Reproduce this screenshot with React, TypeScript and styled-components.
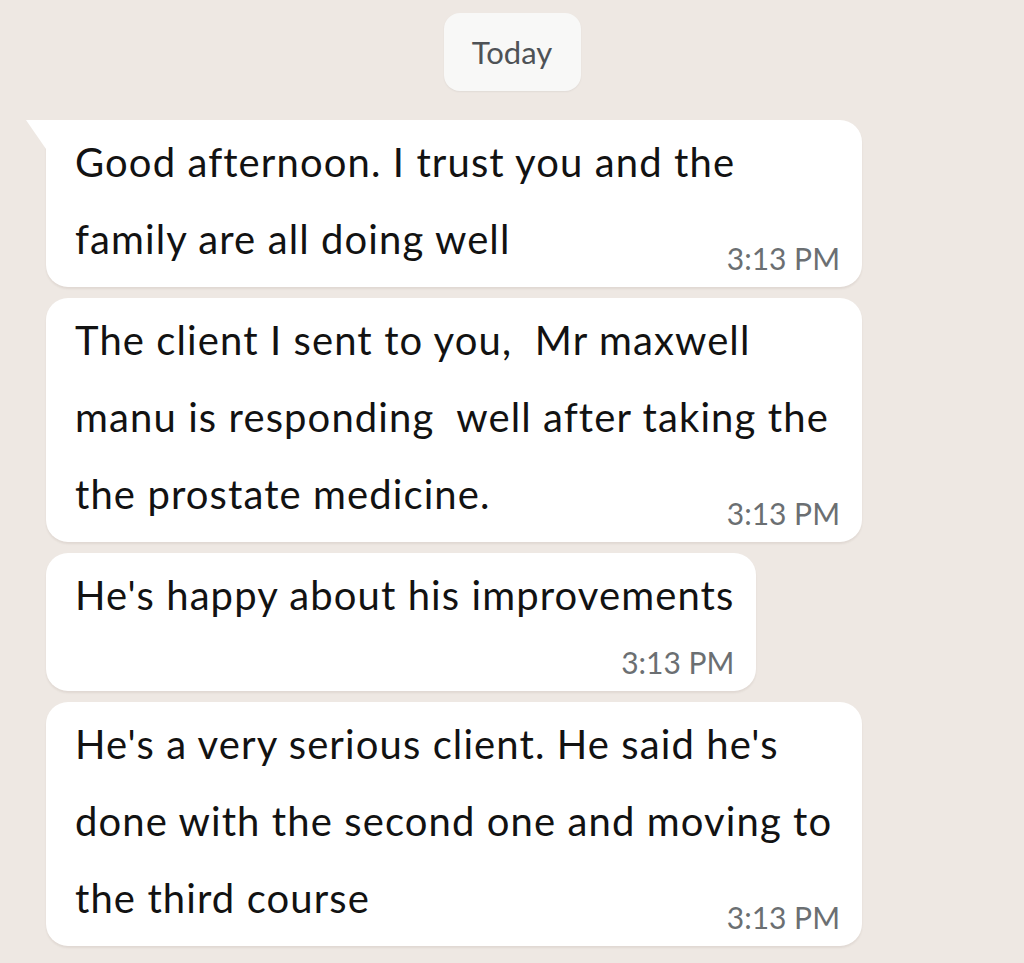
import React from 'react';
import styled, { createGlobalStyle } from 'styled-components';

const GlobalStyle = createGlobalStyle`
  html, body {
    margin: 0;
    padding: 0;
    background: #eee8e3;
  }
`;

const ChatScreen = styled.div`
  min-height: 963px;
  box-sizing: border-box;
  padding: 13px 0 16px;
  background: #eee8e3;
  font-family: Lato, "Open Sans", sans-serif;
`;

const DateRow = styled.div`
  display: flex;
  justify-content: center;
`;

const DatePill = styled.div`
  box-sizing: border-box;
  width: 137px;
  height: 78px;
  display: flex;
  align-items: center;
  justify-content: center;
  background: #f8f8f7;
  color: #4e5256;
  font-size: 31px;
  border-radius: 16px;
  box-shadow: 0 1px 2px rgba(0, 0, 0, 0.06);
`;

const MessageList = styled.div`
  display: flex;
  flex-direction: column;
  align-items: flex-start;
  gap: 11px;
  margin-top: 29px;
  padding-left: 46px;
`;

const Bubble = styled.div<{ $tail?: boolean }>`
  position: relative;
  box-sizing: border-box;
  max-width: 816px;
  padding: 4px 22px 14px 29px;
  background: #ffffff;
  border-radius: 22px;
  border-top-left-radius: ${({ $tail }) => ($tail ? '0' : '22px')};
  box-shadow: 0 2px 2px rgba(90, 70, 50, 0.09);

  &::before {
    content: '';
    display: ${({ $tail }) => ($tail ? 'block' : 'none')};
    position: absolute;
    left: -20px;
    top: 0;
    width: 20px;
    height: 29px;
    background: #ffffff;
    clip-path: polygon(0 0, 100% 0, 100% 100%);
  }
`;

const MessageText = styled.div`
  font-size: 40px;
  line-height: 77px;
  letter-spacing: 1.1px;
  color: #121212;
  white-space: pre-wrap;
`;

const Meta = styled.div<{ $below?: boolean }>`
  margin-top: ${({ $below }) => ($below ? '13px' : '-35px')};
  text-align: right;
  font-size: 30px;
  line-height: 30px;
  color: #6b6f72;
`;

type Message = {
  text: string;
  time: string;
  tail?: boolean;
  metaBelow?: boolean;
};

const messages: Message[] = [
  {
    text: 'Good afternoon. I trust you and the family are all doing well',
    time: '3:13 PM',
    tail: true,
  },
  {
    text: 'The client I sent to you,  Mr maxwell manu is responding  well after taking the the prostate medicine.',
    time: '3:13 PM',
  },
  {
    text: "He's happy about his improvements",
    time: '3:13 PM',
    metaBelow: true,
  },
  {
    text: "He's a very serious client. He said he's done with the second one and moving to the third course",
    time: '3:13 PM',
  },
];

const App: React.FC = () => {
  return (
    <>
      <GlobalStyle />
      <ChatScreen>
        <DateRow>
          <DatePill>Today</DatePill>
        </DateRow>
        <MessageList>
          {messages.map((msg, index) => (
            <Bubble key={index} $tail={msg.tail}>
              <MessageText>{msg.text}</MessageText>
              <Meta $below={msg.metaBelow}>{msg.time}</Meta>
            </Bubble>
          ))}
        </MessageList>
      </ChatScreen>
    </>
  );
};

export default App;
